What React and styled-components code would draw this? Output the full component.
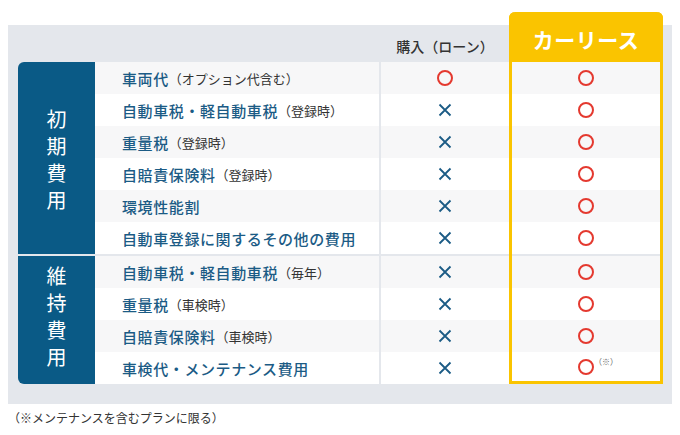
import React from "react";
import styled, { createGlobalStyle } from "styled-components";

const GlobalStyle = createGlobalStyle`
  body {
    margin: 0;
    background: #ffffff;
    font-family: "Noto Sans CJK JP", "Noto Sans", sans-serif;
    color: #333333;
  }
`;

const BLUE = "#0a5a86";
const TEXT_BLUE = "#1b5b85";
const YELLOW = "#fac400";
const PANEL = "#e4e7ec";
const RED = "#e4392f";

export const StyledPanel = styled.div`
  margin: 25px 8px 0;
  padding: 0 9px 20px 10px;
  background-color: ${PANEL};
`;

export const StyledTable = styled.div`
  display: flex;
  align-items: flex-start;
`;

export const StyledLeftPart = styled.div`
  display: flex;
  flex-direction: column;
  gap: 2px;
  width: 491px;
`;

export const StyledHeadRow = styled.div`
  display: flex;
  justify-content: flex-end;
  align-items: flex-end;
  height: 35px;
`;

export const StyledPurchaseHead = styled.div`
  width: 128px;
  padding-bottom: 4px;
  text-align: center;
  font-size: 14px;
  line-height: 20px;
  font-weight: 500;
  color: #333333;
`;

export const StyledGroup = styled.div`
  display: flex;
`;

export const StyledLabel = styled.div`
  width: 77px;
  display: flex;
  justify-content: center;
  align-items: center;
  padding-top: ${(props) => props.$shift || 0}px;
  box-sizing: border-box;
  background-color: ${BLUE};
  border-radius: ${(props) => (props.$top ? "6px 0 0 0" : "0 0 0 6px")};
  color: #ffffff;
  font-size: 20px;
  letter-spacing: 7px;
  writing-mode: vertical-rl;
  text-orientation: upright;
`;

export const StyledRows = styled.div`
  display: flex;
  flex-direction: column;
`;

export const StyledRow = styled.div`
  display: grid;
  grid-template-columns: 284px 128px;
  column-gap: 2px;
  height: 32px;
  & > div {
    background-color: #ffffff;
  }
  &:nth-child(odd) > div {
    background-color: #f7f7f8;
  }
`;

export const StyledItem = styled.div`
  display: flex;
  align-items: center;
  padding-left: 27px;
  font-size: 15px;
  font-weight: 500;
  letter-spacing: 0.6px;
  color: ${TEXT_BLUE};
  white-space: nowrap;
`;

export const StyledSub = styled.span`
  font-size: 13px;
  font-weight: 400;
  letter-spacing: 0;
  color: #333333;
`;

export const StyledMarkCell = styled.div`
  display: flex;
  justify-content: center;
  align-items: center;
  height: ${(props) => (props.$short ? 29 : 32)}px;
`;

export const StyledCircle = styled.span`
  position: relative;
  display: block;
  width: 16px;
  height: 16px;
  box-sizing: border-box;
  border: 2px solid ${RED};
  border-radius: 50%;
`;

export const StyledNote = styled.span`
  position: absolute;
  left: 14px;
  top: -4px;
  font-size: 8px;
  line-height: 10px;
  color: #666666;
  white-space: nowrap;
`;

export const StyledLeaseColumn = styled.div`
  display: flex;
  flex-direction: column;
  width: 154px;
  box-sizing: border-box;
  margin-top: -13px;
  border: 3px solid ${YELLOW};
  border-top: none;
  border-radius: 6px 6px 0 0;
  background-color: ${PANEL};
`;

export const StyledLeaseHead = styled.div`
  height: 50px;
  margin: 0 -3px;
  padding-top: 3px;
  box-sizing: border-box;
  display: flex;
  justify-content: center;
  align-items: center;
  background-color: ${YELLOW};
  border-radius: 6px 6px 0 0;
  color: #ffffff;
  font-size: 21px;
  font-weight: 700;
  letter-spacing: 0.5px;
`;

export const StyledLeaseGroup = styled.div`
  display: flex;
  flex-direction: column;
  margin-top: ${(props) => (props.$gap ? 2 : 0)}px;
  & > div {
    background-color: #ffffff;
  }
  & > div:nth-child(odd) {
    background-color: #f7f7f8;
  }
`;

export const StyledFootnote = styled.div`
  margin: 6px 0 0 8px;
  font-size: 12px;
  line-height: 16px;
  color: #333333;
`;

function Cross() {
  return (
    <svg width="14" height="14" viewBox="0 0 14 14">
      <path
        d="M1.5 1.5 L12.5 12.5 M12.5 1.5 L1.5 12.5"
        stroke={TEXT_BLUE}
        strokeWidth="1.8"
        fill="none"
      />
    </svg>
  );
}

const initialCosts = [
  { main: "車両代", sub: "（オプション代含む）" },
  { main: "自動車税・軽自動車税", sub: "（登録時）" },
  { main: "重量税", sub: "（登録時）" },
  { main: "自賠責保険料", sub: "（登録時）" },
  { main: "環境性能割" },
  { main: "自動車登録に関するその他の費用" },
];

const runningCosts = [
  { main: "自動車税・軽自動車税", sub: "（毎年）" },
  { main: "重量税", sub: "（車検時）" },
  { main: "自賠責保険料", sub: "（車検時）" },
  { main: "車検代・メンテナンス費用", note: true },
];

function CostGroup({ label, items, top, shift }) {
  return (
    <StyledGroup>
      <StyledLabel $top={top} $shift={shift}>
        {label}
      </StyledLabel>
      <StyledRows>
        {items.map((item) => (
          <StyledRow key={item.main + (item.sub || "")}>
            <StyledItem>
              {item.main}
              {item.sub && <StyledSub>{item.sub}</StyledSub>}
            </StyledItem>
            <StyledMarkCell>
              {item.main === "車両代" ? <StyledCircle /> : <Cross />}
            </StyledMarkCell>
          </StyledRow>
        ))}
      </StyledRows>
    </StyledGroup>
  );
}

export default function App() {
  return (
    <>
      <GlobalStyle />
      <StyledPanel>
        <StyledTable>
          <StyledLeftPart>
            <StyledHeadRow>
              <StyledPurchaseHead>購入（ローン）</StyledPurchaseHead>
            </StyledHeadRow>
            <CostGroup label="初期費用" items={initialCosts} top shift={10} />
            <CostGroup label="維持費用" items={runningCosts} />
          </StyledLeftPart>
          <StyledLeaseColumn>
            <StyledLeaseHead>カーリース</StyledLeaseHead>
            <StyledLeaseGroup>
              {initialCosts.map((item) => (
                <StyledMarkCell key={item.main + (item.sub || "")}>
                  <StyledCircle />
                </StyledMarkCell>
              ))}
            </StyledLeaseGroup>
            <StyledLeaseGroup $gap>
              {runningCosts.map((item, i) => (
                <StyledMarkCell
                  key={item.main + (item.sub || "")}
                  $short={i === runningCosts.length - 1}
                >
                  <StyledCircle>
                    {item.note && <StyledNote>（※）</StyledNote>}
                  </StyledCircle>
                </StyledMarkCell>
              ))}
            </StyledLeaseGroup>
          </StyledLeaseColumn>
        </StyledTable>
      </StyledPanel>
      <StyledFootnote>（※メンテナンスを含むプランに限る）</StyledFootnote>
    </>
  );
}
